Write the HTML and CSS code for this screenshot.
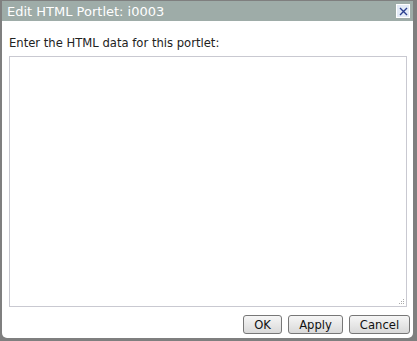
FILE: index.html
```html
<!DOCTYPE html>
<html lang="en">
<head>
    <meta charset="UTF-8">
    <title>Edit HTML Portlet</title>
    <link rel="stylesheet" href="styles.css">
</head>
<body>
    <div class="dialog">
        <div class="titlebar">
            <span class="title">Edit HTML Portlet: i0003</span>
            <span class="close">
                <svg width="9" height="9" viewBox="0 0 9 9">
                    <path d="M1 1 L8 8 M8 1 L1 8" stroke="#2a3f8f" stroke-width="1.4" fill="none"/>
                </svg>
            </span>
        </div>

        <div class="content">
            <label for="htmlData">Enter the HTML data for this portlet:</label>
            <div class="field">
                <textarea id="htmlData"></textarea>
                <!-- resize grip -->
                <svg class="grip" width="7" height="7" viewBox="0 0 7 7">
                    <rect x="5" y="1" width="1" height="1" fill="#aaa"/>
                    <rect x="3" y="3" width="1" height="1" fill="#aaa"/>
                    <rect x="5" y="3" width="1" height="1" fill="#aaa"/>
                    <rect x="1" y="5" width="1" height="1" fill="#aaa"/>
                    <rect x="3" y="5" width="1" height="1" fill="#aaa"/>
                    <rect x="5" y="5" width="1" height="1" fill="#aaa"/>
                </svg>
            </div>
        </div>

        <div class="buttons">
            <button class="btn btn-ok">OK</button>
            <button class="btn btn-apply">Apply</button>
            <button class="btn btn-cancel">Cancel</button>
        </div>
    </div>
</body>
</html>
```

FILE: styles.css
```css
* {
    margin: 0;
    padding: 0;
    box-sizing: border-box;
}

body {
    background: #7f7f7f;
    font-family: 'DejaVu Sans', Verdana, sans-serif;
    padding: 1px 4px 3px 2px;
    height: 341px;
    overflow: hidden;
}

.dialog {
    width: 411px;
    height: 337px;
    background: #fff;
    border-radius: 0 0 5px 5px;
    display: flex;
    flex-direction: column;
}

.titlebar {
    height: 20px;
    background: #9eaca8;
    color: #fff;
    display: flex;
    align-items: center;
    justify-content: space-between;
    padding: 0 3px 0 5px;
}

.title {
    font-size: 13px;
}

.close {
    width: 14px;
    height: 14px;
    border: 1px solid #fff;
    background: #e3ebf7;
    display: flex;
    align-items: center;
    justify-content: center;
}

.content {
    padding: 15px 5px 0 7px;
    display: flex;
    flex-direction: column;
}

label {
    font-size: 11.6px;
    color: #222;
    margin-bottom: 6px;
}

.field {
    position: relative;
    width: 398px;
    height: 251px;
}

textarea {
    width: 100%;
    height: 100%;
    border: 1px solid #c9c9d1;
    resize: none;
    font-family: inherit;
    font-size: 12px;
    display: block;
}

.grip {
    position: absolute;
    right: 2px;
    bottom: 2px;
}

.buttons {
    display: flex;
    justify-content: flex-end;
    gap: 6px;
    padding: 8px 3px 0 0;
}

.btn {
    height: 19px;
    font-family: 'DejaVu Sans', Verdana, sans-serif;
    font-size: 11.6px;
    color: #111;
    border: 1px solid #777;
    border-radius: 3px;
    background: linear-gradient(#f6f6f6, #d9d9d9);
    padding: 0;
}

.btn-ok {
    width: 39px;
}

.btn-apply {
    width: 55px;
}

.btn-cancel {
    width: 61px;
}
```
